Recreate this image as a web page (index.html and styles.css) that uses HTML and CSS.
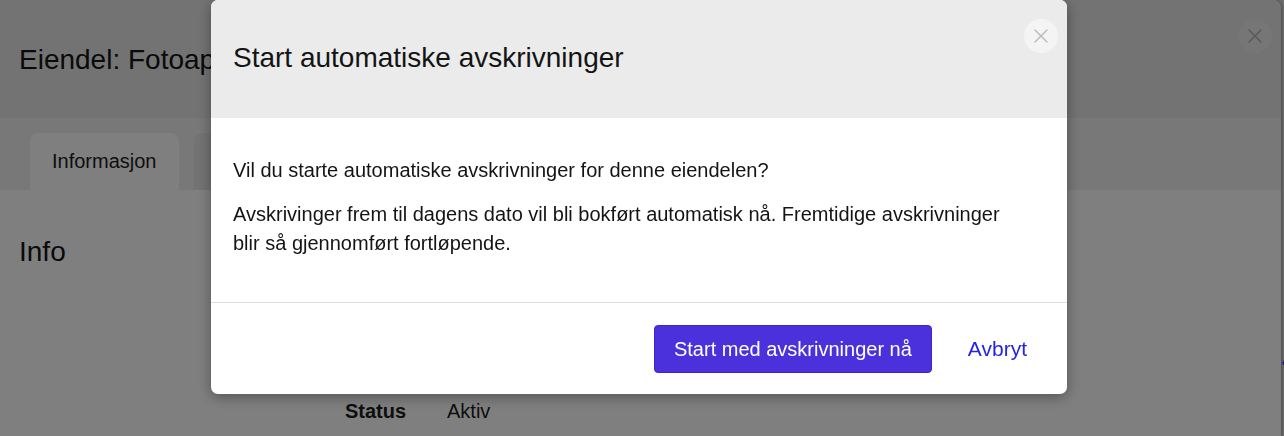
FILE: index.html
```html
<!DOCTYPE html>
<html lang="no">
<head>
<meta charset="utf-8">
<title>Start automatiske avskrivninger</title>
<link rel="stylesheet" href="styles.css">
</head>
<body>
<div class="page">
  <aside class="drawer">
    <header class="drawer-header">
      <h1 class="drawer-title">Eiendel: Fotoapparat</h1>
      <button class="close-btn drawer-close" aria-label="Lukk">
        <svg viewBox="0 0 16 16" width="16" height="16"><path d="M2 2L14 14M14 2L2 14" stroke="currentColor" stroke-width="1.6" stroke-linecap="round"/></svg>
      </button>
    </header>
    <nav class="tabs">
      <div class="tab active">Informasjon</div>
      <div class="tab">Avskrivninger</div>
    </nav>
    <section class="drawer-content">
      <h2 class="section-title">Info</h2>
      <div class="fields">
        <span class="field-label">Status</span>
        <span class="field-value">Aktiv</span>
      </div>
    </section>
  </aside>
  <div class="behind">
    <svg class="behind-icon" viewBox="0 0 14 14" width="14" height="14" aria-hidden="true"><path d="M2 12L7 2M2 12H12" stroke="#3535ff" stroke-width="2" fill="none"/></svg>
  </div>
</div>

<div class="overlay"></div>

<div class="modal-layer">
  <div class="modal" role="dialog">
    <div class="modal-header">
      <h2 class="modal-title">Start automatiske avskrivninger</h2>
      <button class="close-btn modal-close" aria-label="Lukk">
        <svg viewBox="0 0 16 16" width="16" height="16"><path d="M2 2L14 14M14 2L2 14" stroke="currentColor" stroke-width="1.4" stroke-linecap="round"/></svg>
      </button>
    </div>
    <div class="modal-body">
      <p>Vil du starte automatiske avskrivninger for denne eiendelen?</p>
      <p>Avskrivinger frem til dagens dato vil bli bokført automatisk nå. Fremtidige avskrivninger blir så gjennomført fortløpende.</p>
    </div>
    <div class="modal-footer">
      <button class="btn-primary">Start med avskrivninger nå</button>
      <button class="btn-link">Avbryt</button>
    </div>
  </div>
</div>
</body>
</html>
```
FILE: styles.css
```css
html, body {
  margin: 0;
  height: 100%;
  overflow: hidden;
}
body {
  font-family: "Liberation Sans", Arial, sans-serif;
  color: #1c1c1c;
  background: #dcdcdc;
}
.page {
  display: flex;
  height: 100%;
}
.drawer {
  width: 1281px;
  flex: none;
  background: #ffffff;
  border-top-right-radius: 8px;
  box-shadow: 1px 0 3px rgba(0,0,0,0.35);
  display: flex;
  flex-direction: column;
  position: relative;
}
.drawer-header {
  height: 118px;
  background: #e6e6e6;
  border-top-right-radius: 8px;
  display: flex;
  align-items: center;
  justify-content: space-between;
  padding: 0 9px 0 19px;
}
.drawer-title {
  margin: 0;
  font-size: 28px;
  font-weight: normal;
  line-height: 34px;
  padding-top: 2px;
  color: #141414;
}
.close-btn {
  width: 34px;
  height: 34px;
  border-radius: 50%;
  border: none;
  padding: 0;
  display: flex;
  align-items: center;
  justify-content: center;
  cursor: pointer;
}
.drawer-close {
  background: #ededed;
  color: #b4b4b4;
  align-self: flex-start;
  margin-top: 19px;
}
.tabs {
  height: 72px;
  box-sizing: border-box;
  background: #f0f0f0;
  display: flex;
  align-items: flex-end;
  gap: 15px;
  padding-left: 30px;
}
.tab {
  height: 57px;
  box-sizing: border-box;
  padding: 0 22px;
  display: flex;
  align-items: center;
  font-size: 20px;
  border-radius: 8px 8px 0 0;
  background: #e6e6e6;
}
.tab.active {
  background: #ffffff;
}
.drawer-content {
  padding: 0 19px;
}
.section-title {
  margin: 45px 0 0;
  font-size: 28px;
  font-weight: normal;
  line-height: 34px;
  color: #141414;
}
.fields {
  display: grid;
  grid-template-columns: 102px auto;
  margin: 130px 0 0 326px;
  font-size: 20px;
  line-height: 24px;
}
.field-label {
  font-weight: bold;
}
.behind {
  flex: 1;
}
.behind-icon {
  display: block;
  margin-top: 352px;
}
.overlay {
  position: fixed;
  inset: 0;
  background: rgba(0,0,0,0.5);
}
.modal-layer {
  position: fixed;
  inset: 0;
  padding-left: 211px;
}
.modal {
  width: 856px;
  background: #ffffff;
  border-radius: 7px;
  overflow: hidden;
  box-shadow: 0 3px 14px rgba(0,0,0,0.35);
}
.modal-header {
  height: 118px;
  background: #ebebeb;
  display: flex;
  justify-content: space-between;
  align-items: flex-start;
  padding: 0 9px 0 22px;
}
.modal-title {
  margin: 0;
  font-size: 28px;
  font-weight: normal;
  line-height: 34px;
  padding-top: 41px;
  color: #141414;
}
.modal-close {
  margin-top: 19px;
  background: #f4f4f4;
  color: #b8b8b8;
}
.modal-body {
  padding: 38px 40px 44px 22px;
  font-size: 20px;
  line-height: 29px;
  color: #141414;
}
.modal-body p {
  margin: 0 0 15px;
}
.modal-body p:last-child {
  margin-bottom: 0;
}
.modal-footer {
  border-top: 1px solid #dedede;
  display: flex;
  justify-content: flex-end;
  align-items: center;
  padding: 22px 22px 21px;
}
.btn-primary {
  height: 48px;
  padding: 0 19px;
  background: #4b31dc;
  border: 1px solid #3f26cc;
  border-radius: 4px;
  color: #ffffff;
  font-family: "Liberation Sans", Arial, sans-serif;
  font-size: 20px;
  cursor: pointer;
}
.btn-link {
  background: none;
  border: none;
  padding: 0 18px;
  margin-left: 18px;
  height: 48px;
  color: #2424e8;
  font-family: "Liberation Sans", Arial, sans-serif;
  font-size: 21px;
  cursor: pointer;
}
```
